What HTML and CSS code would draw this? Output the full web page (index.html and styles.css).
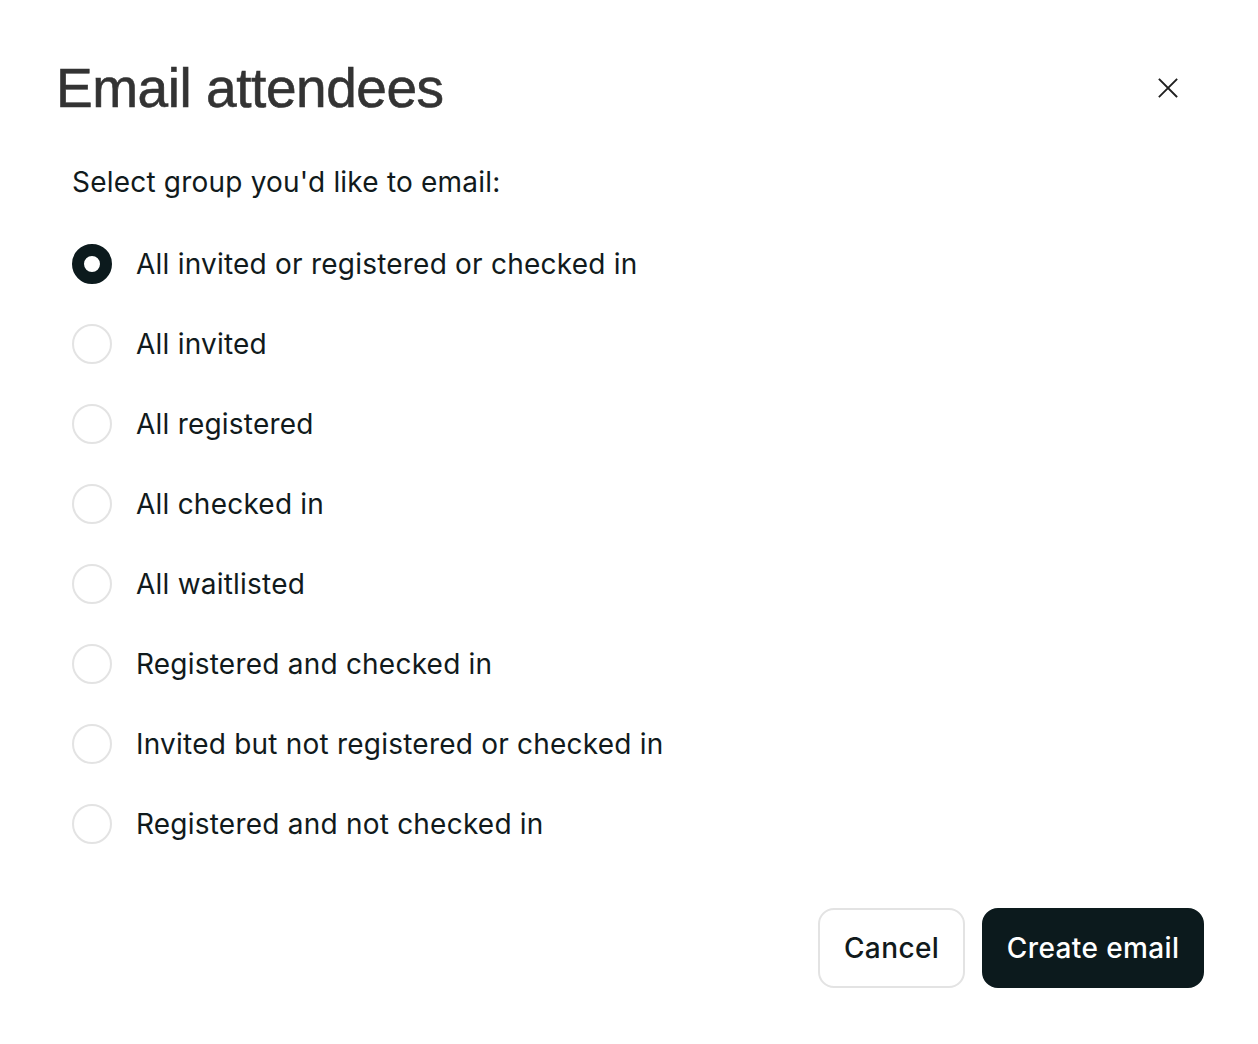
FILE: index.html
```html
<!DOCTYPE html>
<html lang="en">
<head>
<meta charset="utf-8">
<title>Email attendees</title>
<link rel="stylesheet" href="styles.css">
</head>
<body>
<div class="dialog">
  <header class="dialog-header">
    <h1 class="dialog-title">Email attendees</h1>
    <button class="close-btn" aria-label="Close">
      <svg width="22" height="22" viewBox="0 0 22 22" fill="none" stroke="#1f1f1f" stroke-width="1.8" stroke-linecap="square">
        <path d="M2.5 2.5L19.5 19.5M19.5 2.5L2.5 19.5"/>
      </svg>
    </button>
  </header>
  <div class="dialog-body">
    <p class="prompt">Select group you'd like to email:</p>
    <ul class="options">
      <li class="option"><span class="radio checked"></span><span class="label">All invited or registered or checked in</span></li>
      <li class="option"><span class="radio"></span><span class="label">All invited</span></li>
      <li class="option"><span class="radio"></span><span class="label">All registered</span></li>
      <li class="option"><span class="radio"></span><span class="label">All checked in</span></li>
      <li class="option"><span class="radio"></span><span class="label">All waitlisted</span></li>
      <li class="option"><span class="radio"></span><span class="label">Registered and checked in</span></li>
      <li class="option"><span class="radio"></span><span class="label">Invited but not registered or checked in</span></li>
      <li class="option"><span class="radio"></span><span class="label">Registered and not checked in</span></li>
    </ul>
  </div>
  <footer class="dialog-footer">
    <button class="btn btn-secondary">Cancel</button>
    <button class="btn btn-primary">Create email</button>
  </footer>
</div>
</body>
</html>
```
FILE: styles.css
```css
html, body {
  margin: 0;
  padding: 0;
  background: #ffffff;
}

body {
  font-family: Inter, "Liberation Sans", sans-serif;
  color: #111a1c;
}

.dialog {
  width: 1258px;
  height: 1044px;
  box-sizing: border-box;
  padding: 56px 54px 0 56px;
  display: flex;
  flex-direction: column;
}

.dialog-header {
  display: flex;
  align-items: center;
  justify-content: space-between;
  height: 64px;
}

.dialog-title {
  margin: 0;
  font-family: "Liberation Sans", Arial, sans-serif;
  font-weight: 400;
  font-size: 55px;
  letter-spacing: -0.45px;
  color: #333333;
  -webkit-text-stroke: 0.6px #333333;
}

.close-btn {
  border: 0;
  background: none;
  padding: 0;
  width: 22px;
  height: 22px;
  margin-right: 25px;
  cursor: pointer;
}

.dialog-body {
  padding-left: 16px;
  padding-top: 42px;
}

.prompt {
  margin: 0;
  font-size: 28px;
  line-height: 40px;
  letter-spacing: 0.2px;
}

.options {
  list-style: none;
  margin: 42px 0 0;
  padding: 0;
  display: flex;
  flex-direction: column;
  gap: 40px;
}

.option {
  display: flex;
  align-items: center;
  gap: 24px;
  height: 40px;
}

.radio {
  flex: none;
  box-sizing: border-box;
  width: 40px;
  height: 40px;
  border-radius: 50%;
  border: 2px solid #e3e3e3;
  background: #fff;
}

.radio.checked {
  border: 12px solid #0c1a1d;
}

.label {
  font-size: 28px;
  line-height: 40px;
  letter-spacing: 0.22px;
}

.dialog-footer {
  display: flex;
  justify-content: flex-end;
  gap: 17px;
  margin-top: 64px;
}

.btn {
  font-family: Inter, "Liberation Sans", sans-serif;
  font-size: 28px;
  font-weight: 500;
  letter-spacing: 0.4px;
  height: 80px;
  border-radius: 16px;
  padding: 0 24px;
  cursor: pointer;
}

.btn-secondary {
  background: #fff;
  color: #111a1c;
  border: 2px solid #e3e3e3;
}

.btn-primary {
  background: #0c1a1d;
  color: #fff;
  border: 2px solid #0c1a1d;
  padding: 0 22.5px;
}
```
